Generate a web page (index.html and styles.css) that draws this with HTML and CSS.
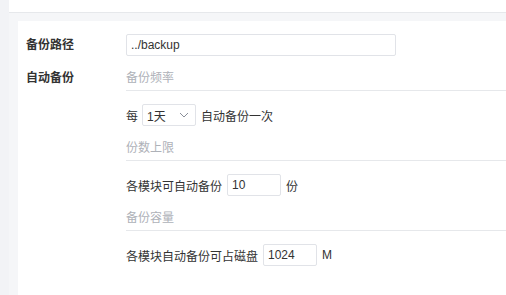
FILE: index.html
```html
<!DOCTYPE html>
<html lang="zh">
<head>
<meta charset="utf-8">
<link rel="stylesheet" href="styles.css">
</head>
<body>
<div class="page">
  <div class="side"></div>
  <div class="main">
    <div class="topbar"></div>
    <div class="content">
      <div class="card">
        <div class="form-row">
          <div class="label">备份路径</div>
          <div class="field"><input class="input path" type="text" value="../backup"></div>
        </div>
        <div class="form-row">
          <div class="label tall">自动备份</div>
          <div class="field">
            <div class="section">
              <div class="section-title">备份频率</div>
              <div class="line-row">
                <span>每</span>
                <div class="select"><span>1天</span>
                  <svg class="chev" width="10" height="6" viewBox="0 0 10 6"><path d="M1 1 L5 5 L9 1" fill="none" stroke="#8a8f99" stroke-width="1"/></svg>
                </div>
                <span>自动备份一次</span>
              </div>
            </div>
            <div class="section">
              <div class="section-title">份数上限</div>
              <div class="line-row">
                <span>各模块可自动备份</span>
                <input class="input small" type="text" value="10">
                <span>份</span>
              </div>
            </div>
            <div class="section">
              <div class="section-title">备份容量</div>
              <div class="line-row">
                <span>各模块自动备份可占磁盘</span>
                <input class="input small" type="text" value="1024">
                <span>M</span>
              </div>
            </div>
          </div>
        </div>
      </div>
    </div>
  </div>
</div>
</body>
</html>
```

FILE: styles.css
```css
* { box-sizing: border-box; }
html, body { margin: 0; padding: 0; }
body {
  width: 506px;
  height: 295px;
  overflow: hidden;
  background: #ffffff;
  font-family: "Liberation Sans", "Noto Sans CJK SC", sans-serif;
  font-size: 12px;
  color: #333333;
}
.page {
  display: flex;
  height: 295px;
}
.side {
  width: 9px;
  flex: none;
  background: #f2f3f6;
}
.main {
  flex: 1;
  display: flex;
  flex-direction: column;
  min-width: 0;
}
.topbar {
  height: 13px;
  background: #ffffff;
  border-bottom: 1px solid #e6e8eb;
  flex: none;
}
.content {
  flex: 1;
  background: #f5f6f8;
  padding: 8px 0 0 9px;
}
.card {
  background: #ffffff;
  height: 100%;
  padding: 13px 0 0 8px;
}
.form-row {
  display: flex;
  align-items: flex-start;
}
.label {
  width: 100px;
  flex: none;
  font-weight: bold;
  color: #333;
  line-height: 22px;
}
.label.tall {
  margin-top: 10px;
  line-height: 24px;
}
.field {
  flex: 1;
  min-width: 0;
}
.input {
  height: 22px;
  border: 1px solid #e1e3e8;
  border-radius: 2px;
  padding: 0 4px;
  font-family: "Liberation Sans", "Noto Sans CJK SC", sans-serif;
  font-size: 12px;
  color: #333;
  outline: none;
  background: #fff;
}
.input.path {
  width: 270px;
  display: block;
}
.input.small {
  width: 54px;
}
.section {
  display: flex;
  flex-direction: column;
}
.section:first-child {
  margin-top: 10px;
}
.section-title {
  line-height: 24px;
  height: 25px;
  color: #aeb1b8;
  border-bottom: 1px solid #e6e8eb;
}
.line-row {
  display: flex;
  align-items: center;
  gap: 5px;
  height: 22px;
  margin: 13px 0 10px;
  white-space: nowrap;
}
.select {
  width: 54px;
  height: 22px;
  border: 1px solid #e1e3e8;
  border-radius: 2px;
  display: flex;
  align-items: center;
  justify-content: space-between;
  padding: 0 6px 0 4px;
  margin-left: -1px;
}
.chev { display: block; }
```
